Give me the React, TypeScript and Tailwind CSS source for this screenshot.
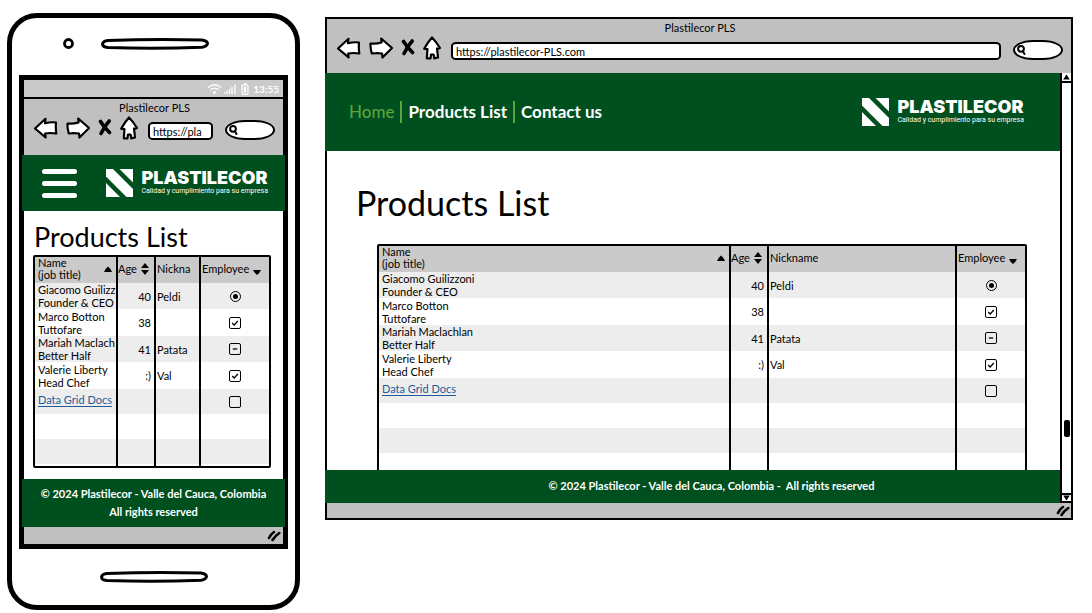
import React from "react";

type Mark = "radio" | "checked" | "mixed" | "empty";

interface Person {
  name: string;
  shortName: string;
  title: string;
  age: string;
  nickname: string;
  employee: Mark;
}

const people: Person[] = [
  { name: "Giacomo Guilizzoni", shortName: "Giacomo Guilizz", title: "Founder & CEO", age: "40", nickname: "Peldi", employee: "radio" },
  { name: "Marco Botton", shortName: "Marco Botton", title: "Tuttofare", age: "38", nickname: "", employee: "checked" },
  { name: "Mariah Maclachlan", shortName: "Mariah Maclach", title: "Better Half", age: "41", nickname: "Patata", employee: "mixed" },
  { name: "Valerie Liberty", shortName: "Valerie Liberty", title: "Head Chef", age: ":)", nickname: "Val", employee: "checked" },
];

function ArrowIcon({ forward = false }: { forward?: boolean }) {
  return (
    <svg viewBox="0 0 24 24" className="h-6 w-6" fill="#fff" stroke="#000" strokeWidth="2.200" strokeLinejoin="round" aria-hidden="true">
      {forward ? (
        <path d="M1.500 7.500 Q7 8.200 12.500 6.500 L12.200 2.500 L23 12 L13.500 21.500 L13 17.500 Q8 16.800 2.800 17.500 Q1.200 12 1.500 7.500Z" />
      ) : (
        <path d="M1 12.500 L11.500 2.800 L11 7.200 Q17 5.800 22 6.500 Q21.500 12 22.300 17.500 Q16 16.500 11.200 17.500 L11.600 21.300 Z" />
      )}
    </svg>
  );
}

function StopIcon() {
  return (
    <svg viewBox="0 0 14 24" className="h-6 w-3.5" fill="none" stroke="#000" strokeWidth="3.600" strokeLinecap="round" aria-hidden="true">
      <path d="M2.500 5.500 Q6 11 11.500 16.500" />
      <path d="M11.200 5 Q7 9.500 3 17.500" />
    </svg>
  );
}

function HomeIcon() {
  return (
    <svg viewBox="0 0 18 24" className="h-6 w-[18px]" fill="#fff" stroke="#000" strokeWidth="2.200" strokeLinejoin="round" aria-hidden="true">
      <path d="M9 1.500 Q13 5.500 17 12 Q15.500 13.200 14 12.500 Q14.500 17 15 21.500 L11.200 22.300 Q11.300 20 10.500 18.500 L8 18.500 L7.500 22.300 L3.800 22.300 Q4.300 17 4.400 13 L1.200 12.800 Q4.500 6.500 9 1.500Z" />
    </svg>
  );
}

function GripIcon() {
  return (
    <svg viewBox="0 0 14 12" className="h-3 w-3.5" fill="none" stroke="#000" strokeWidth="2.600" strokeLinecap="round" aria-hidden="true">
      <path d="M2 8 Q4 4 7 2" />
      <path d="M5.500 10 Q8 6 12.300 3" />
    </svg>
  );
}

function Toolbar({ id, url, tall = false }: { id: string; url: string; tall?: boolean }) {
  return (
    <div className={"bg-[#c0c0c0] pt-0.5 pl-2.5 pr-2 " + (tall ? "pb-4" : "pb-[13px]")}>
      <p className="text-center text-[11px] leading-[14px]">Plastilecor PLS</p>
      <div className="mt-px flex items-end gap-2">
        <button type="button" aria-label="Back"><ArrowIcon /></button>
        <button type="button" aria-label="Forward"><ArrowIcon forward /></button>
        <button type="button" aria-label="Stop"><StopIcon /></button>
        <button type="button" aria-label="Home page"><HomeIcon /></button>
        <input
          id={id + "-url"}
          aria-label="Address"
          readOnly
          value={url}
          className="ml-0.5 h-[18px] min-w-0 flex-1 rounded-[5px/4px] border-2 border-black bg-white px-[3px] text-[11px] leading-[14px] outline-none"
        />
        <label className="ml-1 flex h-5 w-[50px] items-center rounded-[20px/10px] border-2 border-black bg-white pl-px">
          <svg viewBox="0 0 10 12" className="h-3 w-2.5 shrink-0" fill="none" stroke="#000" strokeWidth="2" strokeLinecap="round" aria-hidden="true">
            <circle cx="5" cy="4.800" r="2.900" />
            <path d="M7 7.500 L8.500 10" />
          </svg>
          <input aria-label="Search" type="text" className="w-full min-w-0 bg-transparent text-[11px] outline-none" />
        </label>
      </div>
    </div>
  );
}

function Logo() {
  return (
    <div className="flex items-center gap-2 text-white">
      <svg viewBox="0 0 27 28" className="h-7 w-[27px] shrink-0" fill="#fff" aria-hidden="true">
        <path d="M0 0 H7 L27 20 V28 H20.500 L0 7.500Z" />
        <path d="M13.500 0 H27 V13.500Z" />
        <path d="M0 14 L14 28 H0Z" />
      </svg>
      <div>
        <p className="font-[Inter,sans-serif] text-[18px] leading-[16px] font-black">PLASTILECOR</p>
        <p className="font-[Roboto,sans-serif] text-[7px] leading-[10px] whitespace-nowrap">Calidad y cumplimiento para su empresa</p>
      </div>
    </div>
  );
}

function EmployeeMark({ mark, name, label }: { mark: Mark; name: string; label: string }) {
  if (mark === "radio") {
    return (
      <input
        type="radio"
        name={name}
        aria-label={label}
        defaultChecked
        className="block size-[11px] appearance-none rounded-full border border-black bg-black bg-clip-content p-[2px]"
      />
    );
  }
  return (
    <span className="grid size-3">
      <input
        type="checkbox"
        aria-label={label}
        defaultChecked={mark === "checked"}
        className="col-start-1 row-start-1 size-3 appearance-none rounded-[2px] border border-black"
      />
      <svg viewBox="0 0 12 12" className="pointer-events-none col-start-1 row-start-1 size-3" fill="none" stroke="#000" strokeWidth="1.300" aria-hidden="true">
        {mark === "checked" && <path d="M3.200 6 L5.200 8 L8.800 4" />}
        {mark === "mixed" && <path d="M3.800 6 H8.200" />}
      </svg>
    </span>
  );
}

const head = "p-0 text-left font-normal whitespace-nowrap";
const line = " border-l-2 border-black";

function DataGrid({ id, compact = false }: { id: string; compact?: boolean }) {
  return (
    <table className="w-full table-fixed border-separate border-spacing-0 text-[11px] leading-[13px]">
      <colgroup>
        <col />
        <col className="w-[38px]" />
        <col className={compact ? "w-[45px]" : "w-[188px]"} />
        <col className="w-[70px]" />
      </colgroup>
      <thead>
        <tr className="h-[26px] bg-[#cacaca] leading-3">
          <th scope="col" className={head + " align-top"}>
            <button type="button" className="flex w-full items-center justify-between pr-1 pl-[3px] text-left">
              <span>Name<br />(job title)</span>
              <svg viewBox="0 0 8 6" className="h-1.5 w-2" aria-hidden="true"><path d="M0 6 Q1 3 4 0.500 Q7 3 8 6Z" /></svg>
            </button>
          </th>
          <th scope="col" className={head + line + " align-top"}>
            <button type="button" className="flex h-6 items-center gap-1">
              Age
              <svg viewBox="0 0 8 12" className="h-3 w-2" aria-hidden="true"><path d="M0 5 L4 0 L8 5Z M0 7 H8 L4 12Z" /></svg>
            </button>
          </th>
          <th scope="col" className={head + line + " align-top"}>
            <button type="button" className="block h-6 pl-px">{compact ? "Nickna" : "Nickname"}</button>
          </th>
          <th scope="col" className={head + line + " align-top"}>
            <button type="button" className="flex h-6 items-center gap-1 pl-px">
              Employee
              <svg viewBox="0 0 8 12" className="h-3 w-2" aria-hidden="true"><path d="M0 7 H8 Q7 9.500 4 12 Q1 9.500 0 7Z" /></svg>
            </button>
          </th>
        </tr>
      </thead>
      <tbody>
        {people.map((p) => (
          <tr key={p.name} className="h-[26px] odd:bg-[#ededed] even:h-[27px]">
            <td className="p-0 pl-[3px] whitespace-nowrap">{compact ? p.shortName : p.name}<br />{p.title}</td>
            <td className={"p-0 pr-[3px] text-right" + line}>{p.age}</td>
            <td className={"p-0 pl-px" + line}>{p.nickname}</td>
            <td className={"p-0" + line}>
              <div className="flex justify-center">
                <EmployeeMark mark={p.employee} name={id + "-employee"} label={p.name + " is an employee"} />
              </div>
            </td>
          </tr>
        ))}
        <tr className="h-[25px] bg-[#ededed]">
          <td className="p-0 pb-1 pl-[3px] whitespace-nowrap">
            <a href="#docs" className="text-[#1f5c99] underline underline-offset-2">Data Grid Docs</a>
          </td>
          <td className={"p-0" + line} />
          <td className={"p-0" + line} />
          <td className={"p-0" + line}>
            <div className="flex justify-center">
              <EmployeeMark mark="empty" name={id + "-employee"} label="Data Grid Docs is an employee" />
            </div>
          </td>
        </tr>
        {[0, 1, 2].map((n) => (
          <tr key={n} className="h-[25px] even:bg-white odd:bg-[#ededed]">
            <td className="p-0" />
            <td className={"p-0" + line} />
            <td className={"p-0" + line} />
            <td className={"p-0" + line} />
          </tr>
        ))}
      </tbody>
    </table>
  );
}

function Slot() {
  return (
    <svg viewBox="0 0 108 12" className="h-3 w-[108px]" fill="#fff" stroke="#000" strokeWidth="3" aria-hidden="true">
      <path d="M7 2.500 Q54 0.800 101 2 Q106.500 3 106.500 5.500 Q106 8.500 101 9.300 Q54 11.200 7 9.600 Q1.500 9 1.500 6 Q2 3 7 2.500Z" />
    </svg>
  );
}

function Phone() {
  return (
    <section aria-label="Mobile view" className="w-[293px] shrink-0 rounded-[30px] border-[5px] border-black bg-white px-[7px]">
      <div className="flex h-[57px] items-center gap-[27px] pb-1.5 pl-11">
        <svg viewBox="0 0 11 11" className="size-[11px]" fill="none" stroke="#000" strokeWidth="2.800" aria-hidden="true"><circle cx="5.500" cy="5.500" r="4" /></svg>
        <Slot />
      </div>
      <div className="border-[5px] border-black">
        <div className="flex h-[19px] items-center justify-end gap-1 border-b-2 border-black bg-[#cacaca] pr-1 text-white">
          <svg viewBox="0 0 30 12" className="h-3 w-[30px]" fill="none" stroke="#fff" strokeWidth="1.300" aria-hidden="true">
            <path d="M1 4.500 Q7.500 -1 14 4.500 M3.200 7 Q7.500 3.300 11.800 7" />
            <circle cx="7.500" cy="9.500" r="1.400" fill="#fff" stroke="none" />
            <path d="M17.500 11 V9.500 M20 11 V8 M22.500 11 V6 M25 11 V4 M28 11 V1.500" />
          </svg>
          <svg viewBox="0 0 8 12" className="h-3 w-2" fill="none" stroke="#fff" strokeWidth="1.200" aria-hidden="true">
            <path d="M2.500 1 H5.500 M1 2.500 Q1 2 2 2 H6 Q7 2 7 3 V10.300 Q7 11.300 6 11.300 H2 Q1 11.300 1 10.300Z" />
            <path d="M4 3.800 V9.600" strokeWidth="2.400" />
          </svg>
          <span className="text-[10px] leading-3 font-bold">13:55</span>
        </div>
        <Toolbar id="phone" url="https://pla" tall />
        <div className="-mx-0.5 -mt-px flex h-14 items-center justify-between bg-[#004f1e] pr-[17px] pl-5">
          <button type="button" aria-label="Menu" className="flex flex-col gap-[7px]">
            <span className="h-[5px] w-[35px] rounded-full bg-white" />
            <span className="h-[5px] w-[35px] rounded-full bg-white" />
            <span className="h-[5px] w-[35px] rounded-full bg-white" />
          </button>
          <Logo />
        </div>
        <main className="bg-white pt-2 pr-3 pb-[11px] pl-[9px]">
          <h1 className="pl-px text-[27px] leading-9">Products List</h1>
          <div className="h-[213px] overflow-hidden rounded-[2px] border-2 border-black">
            <DataGrid id="phone" compact />
          </div>
        </main>
        <footer className="-mx-0.5 bg-[#004f1e] py-1.5 text-center text-[11px] leading-[18px] font-bold text-white">
          <p>© 2024 Plastilecor - Valle del Cauca, Colombia</p>
          <p>All rights reserved</p>
        </footer>
        <div className="flex h-[17px] items-center justify-end bg-[#c0c0c0] pr-0.5"><GripIcon /></div>
      </div>
      <div className="flex h-14 items-center justify-center"><Slot /></div>
    </section>
  );
}

function Desktop() {
  return (
    <section aria-label="Desktop view" className="mt-1 min-w-0 flex-1 border-2 border-black bg-white">
      <Toolbar id="desktop" url="https://plastilecor-PLS.com" />
      <div className="flex h-[430px]">
        <div className="-ml-0.5 flex min-w-0 flex-1 flex-col">
          <header className="flex h-[78px] shrink-0 items-center justify-between bg-[#004f1e] pr-9 pl-6">
            <nav className="flex items-center gap-1.5 text-[17px] leading-[22px] font-bold">
              <a href="#home" className="font-medium text-[#5aa63c]">Home</a>
              <span className="h-[22px] w-0.5 bg-[#5aa63c]" />
              <a href="#products" className="text-white">Products List</a>
              <span className="h-[22px] w-0.5 bg-[#5aa63c]" />
              <a href="#contact" className="text-white">Contact us</a>
            </nav>
            <Logo />
          </header>
          <main className="min-h-0 flex-1 overflow-hidden border-l-2 border-black pt-[30px] pr-[33px] pl-[50px]">
            <h1 className="-ml-[21px] text-[34px] leading-[44px]">Products List</h1>
            <div className="mt-[19px] overflow-hidden rounded-[2px] border-2 border-black">
              <DataGrid id="desktop" />
            </div>
          </main>
          <footer className="shrink-0 bg-[#004f1e] pt-1.5 pb-2 pl-[38px] text-center text-[11px] leading-[19px] font-bold text-white">
            © 2024 Plastilecor - Valle del Cauca, Colombia -&nbsp; All rights reserved
          </footer>
        </div>
        <div className="flex w-[11px] flex-col items-center border-l-2 border-black bg-white">
          <button type="button" aria-label="Scroll up" className="flex h-2.5 w-full items-center justify-center border-b-2 border-black">
            <svg viewBox="0 0 7 6" className="h-1.5 w-[7px]" aria-hidden="true"><path d="M3.500 0.500 L6.800 5.500 H0.200Z" /></svg>
          </button>
          <span className="flex-[6]" />
          <span className="h-[17px] w-1.5 rounded-[2px] bg-black" />
          <span className="flex-1" />
          <button type="button" aria-label="Scroll down" className="flex h-2.5 w-full items-center justify-center border-y-2 border-black">
            <svg viewBox="0 0 7 6" className="h-1.5 w-[7px]" aria-hidden="true"><path d="M0.200 0.500 H6.800 L3.500 5.500Z" /></svg>
          </button>
        </div>
      </div>
      <div className="flex h-[15px] items-center justify-end bg-[#c0c0c0] pr-px"><GripIcon /></div>
    </section>
  );
}

export default function App() {
  return (
    <div className="flex items-start gap-[25px] bg-white pt-[13px] pr-[19px] pb-[3px] pl-[7px] font-[Lato,sans-serif] text-black">
      <Phone />
      <Desktop />
    </div>
  );
}
